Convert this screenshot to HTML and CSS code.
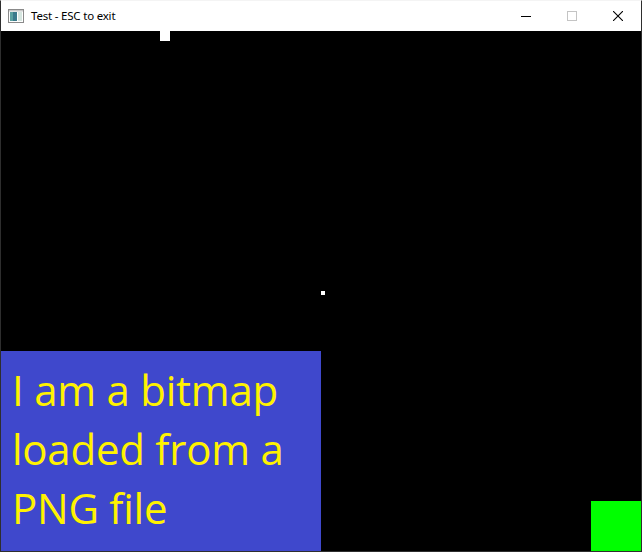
FILE: index.html
```html
<!DOCTYPE html>
<html>
<head>
<meta charset="utf-8">
<link rel="stylesheet" href="styles.css">
</head>
<body>
<div class="window">
  <div class="titlebar">
    <div class="title-left">
      <svg class="app-icon" width="16" height="16" viewBox="0 0 16 16">
        <rect x="0.5" y="1.5" width="15" height="13" fill="#fff" stroke="#8a8a8a"/>
        <rect x="2" y="4" width="7" height="9" fill="#3b7a8c"/>
        <rect x="2" y="4" width="3" height="9" fill="#5aa0a0"/>
        <rect x="10" y="4" width="4" height="9" fill="#d6e6e0"/>
        <rect x="1" y="2" width="14" height="1.5" fill="#c8c8c8"/>
      </svg>
      <span class="title-text">Test - ESC to exit</span>
    </div>
    <div class="controls">
      <div class="ctl">
        <svg width="10" height="10" viewBox="0 0 10 10"><rect x="0" y="5" width="10" height="1" fill="#000"/></svg>
      </div>
      <div class="ctl">
        <svg width="10" height="10" viewBox="0 0 10 10"><rect x="0.5" y="0.5" width="9" height="9" fill="none" stroke="#c4c4c4"/></svg>
      </div>
      <div class="ctl">
        <svg width="10" height="10" viewBox="0 0 10 10"><path d="M0 0 L10 10 M10 0 L0 10" stroke="#000" stroke-width="1.1"/></svg>
      </div>
    </div>
  </div>
  <div class="client">
    <div class="square"></div>
    <div class="dot"></div>
    <div class="bitmap">
      <p class="bitmap-text">I am a bitmap<br>loaded from a<br>PNG file</p>
    </div>
    <div class="green"></div>
  </div>
</div>
</body>
</html>
```

FILE: styles.css
```css
html, body {
  margin: 0;
  padding: 0;
  background: #ffffff;
}

.window {
  width: 640px;
  border: 1px solid #2e2e2e;
  border-top: 1px solid #f4f4f4;
  background: #ffffff;
}

.titlebar {
  height: 30px;
  display: flex;
  align-items: center;
  justify-content: space-between;
  background: #ffffff;
}

.title-left {
  display: flex;
  align-items: center;
  padding-left: 7px;
  gap: 7px;
}

.app-icon {
  display: block;
}

.title-text {
  font-family: "Noto Sans", "Open Sans", sans-serif;
  font-size: 11.5px;
  letter-spacing: -0.2px;
  color: #000;
  position: relative;
  top: -1px;
}

.controls {
  display: flex;
  height: 30px;
}

.ctl {
  width: 46px;
  height: 30px;
  display: flex;
  align-items: center;
  justify-content: center;
}

.ctl svg {
  display: block;
}

.client {
  position: relative;
  width: 640px;
  height: 520px;
  background: #000000;
}

.square {
  position: absolute;
  left: 159px;
  top: 0;
  width: 10px;
  height: 10px;
  background: #ffffff;
}

.dot {
  position: absolute;
  left: 320px;
  top: 260px;
  width: 4px;
  height: 4px;
  background: #ffffff;
}

.bitmap {
  position: absolute;
  left: 0;
  top: 320px;
  width: 320px;
  height: 200px;
  background: #3f48cc;
}

.bitmap-text {
  margin: 0;
  padding: 9px 0 0 11px;
  font-family: "Open Sans", sans-serif;
  font-size: 42px;
  line-height: 59px;
  color: #fff200;
  letter-spacing: -0.25px;
}

.green {
  position: absolute;
  left: 590px;
  top: 470px;
  width: 50px;
  height: 50px;
  background: #00ff00;
}
```
